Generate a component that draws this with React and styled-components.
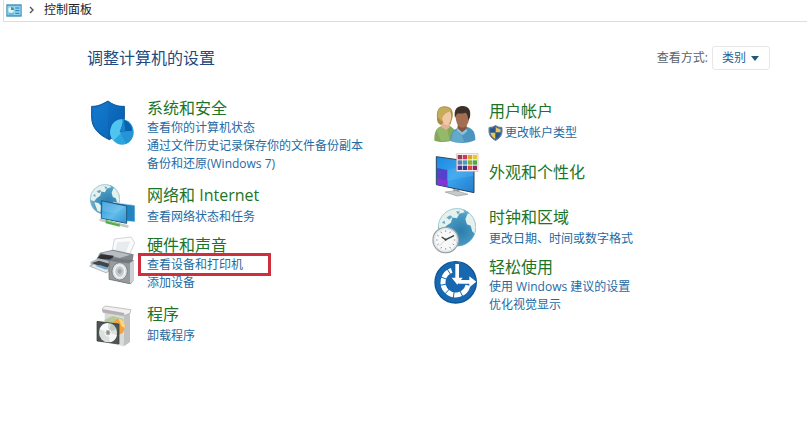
import React from "react";
import styled, { createGlobalStyle } from "styled-components";

const GlobalStyle = createGlobalStyle`
  * { box-sizing: border-box; }
  body {
    margin: 0;
    background: #fff;
    font-family: "Open Sans", "Noto Sans CJK SC", sans-serif;
    font-size: 12px;
    line-height: 18px;
    color: #222;
  }
`;

const AddressBar = styled.nav`
  display: flex;
  align-items: center;
  height: 22px;
  margin-left: 3px;
  padding: 0 2px 1px;
  border: solid #dcdfe0;
  border-width: 0 0 1px 1px;
`;
const Crumb = styled.a`
  color: #222;
  text-decoration: none;
`;
const CrumbChevron = styled.svg`
  width: 6px;
  height: 8px;
  margin: 0 9px 0 7px;
`;
const BarIcon = styled.svg`
  width: 16px;
  height: 13px;
`;

const Header = styled.header`
  display: flex;
  justify-content: space-between;
  align-items: center;
  padding: 24px 37px 0 87px;
`;
const Title = styled.h1`
  margin: 0;
  font-size: 16px;
  font-weight: 400;
  line-height: 24px;
  color: #234a80;
`;
const ViewBy = styled.div`
  display: flex;
  align-items: center;
  gap: 4px;
  color: #59636b;
`;
const SelectBox = styled.span`
  display: grid;
  align-items: center;
  & > * { grid-area: 1 / 1; }
`;
const Select = styled.select`
  appearance: none;
  width: 58px;
  height: 24px;
  padding: 0 0 0 9px;
  border: 1px solid #e4e8ea;
  border-radius: 3px;
  background: #fff;
  font: inherit;
  color: #1b66a0;
`;
const Arrow = styled.svg`
  width: 8px;
  height: 5px;
  justify-self: end;
  margin-right: 11px;
  pointer-events: none;
`;

const Columns = styled.main`
  display: grid;
  grid-template-columns: 1fr 1fr;
  padding: 28px 35px 24px 88px;
`;
const Column = styled.div`
  display: grid;
  align-content: start;
  grid-template-rows: ${(p) => p.$rows};
  padding-top: ${(p) => p.$top || 0}px;
`;
const Category = styled.section`
  display: flex;
  align-items: flex-start;
  gap: 11px;
`;
const Icon = styled.svg`
  flex: none;
  width: 48px;
  height: 48px;
  overflow: visible;
`;
const Details = styled.div`
  display: flex;
  flex-direction: column;
  align-items: flex-start;
  padding-top: ${(p) => (p.$centered ? 10 : 0)}px;
`;
const Name = styled.h2`
  margin: 0 0 ${(p) => (p.$spaced ? 3 : 1)}px;
  font-size: 16px;
  font-weight: 400;
  line-height: 20px;
  a { color: #1d7427; text-decoration: none; }
`;
const Task = styled.a`
  display: flex;
  align-items: center;
  gap: 2px;
  position: relative;
  color: #1e6aa3;
  text-decoration: none;
  white-space: nowrap;
`;
const MarkedTask = styled(Task)`
  &::after {
    content: "";
    position: absolute;
    inset: -3px -28px -2px -9px;
    border: 3px solid #cf2f3c;
  }
`;
const Shield = styled.svg`
  width: 15px;
  height: 16px;
  margin-left: -1px;
`;

const SecurityIcon = () => (
  <Icon viewBox="24 9 144 144" aria-hidden="true">
    <defs>
      <linearGradient id="sec" x1="0" y1="0" x2="1" y2="1">
        <stop offset="0" stopColor="#1378cd" /><stop offset="1" stopColor="#0759a8" />
      </linearGradient>
    </defs>
    <path d="M35 34C53 35 68 27 84 18C98 29 114 35 133 34V70C132 102 113 121 88 134C55 118 35 99 35 66Z" fill="url(#sec)" stroke="#075497" strokeWidth="3" />
    <path d="M40 39C57 39 70 32 84 23V129C53 113 40 95 40 66Z" fill="#1683d8" opacity=".25" />
    <ellipse cx="126" cy="111" rx="35" ry="38" fill="#2ba6df" />
    <path d="M126 73A35 38 0 0 0 100 137L126 112Z" fill="#50c3ee" />
    <path d="M119 111L132 74A35 38 0 0 1 157 108Z" fill="#0862ad" />
    <path d="M132 76L136 106L120 110Z" fill="#1c82cc" />
    <path d="M120 111L160 107A35 38 0 0 1 138 147Z" fill="#2494d4" />
  </Icon>
);

const Globe = ({ id, cx, cy, r }) => (
  <g>
    <defs>
      <radialGradient id={id} cx=".6" cy=".6" r=".65">
        <stop offset="0" stopColor="#2b7dac" /><stop offset=".65" stopColor="#4b9bc2" /><stop offset="1" stopColor="#8fbfd5" />
      </radialGradient>
      <clipPath id={id + "c"}><circle cx={cx} cy={cy} r={r} /></clipPath>
    </defs>
    <circle cx={cx} cy={cy} r={r} fill={`url(#${id})`} />
    <g clipPath={`url(#${id}c)`}>
      <g transform={`translate(${cx} ${cy}) scale(${r / 50})`} fill="#e5f1ed">
        <path d="M-40-32L-20-50L12-54L20-40L6-36L0-24L-12-26L-16-12L-28-4L-36 6L-48 2L-52-20Z" />
        <path d="M28-36L44-40L58-12L50 20L40 10L36-4L26-8L22-22Z" />
        <path d="M-36 10L-22 12L-10 24L-16 44L-26 36Z" />
        <path d="M-28-26l10-6 6 5-8 7zM-2-43l10 2-6 7zM-40-12l7-6 2 9z" fill="#67a9c7" />
      </g>
    </g>
    <circle cx={cx} cy={cy} r={r - 1} fill="none" stroke="#78aec7" strokeWidth="2" opacity=".7" />
  </g>
);

const NetworkIcon = () => (
  <Icon viewBox="24 30 144 144" aria-hidden="true">
    <defs>
      <linearGradient id="net" x1="0" y1="0" x2="1" y2="1">
        <stop offset="0" stopColor="#3194d4" /><stop offset=".55" stopColor="#62bcea" /><stop offset="1" stopColor="#2e93cf" />
      </linearGradient>
    </defs>
    <Globe id="ng" cx={75} cy={73} r={45} />
    <path d="M100 82L165 91V141L100 134Z" fill="#2284c0" stroke="#e3f2f8" strokeWidth="2" />
    <path d="M64 77L140 93V145L64 130Z" fill="url(#net)" stroke="#215b82" strokeWidth="3" />
    <path d="M68 80L136 95L108 115L68 108Z" fill="#8fd1ef" opacity=".3" />
    <path d="M62 135L142 154" stroke="#c5ccc8" strokeWidth="8" strokeLinecap="round" />
    <path d="M77 135L119 146V155L77 145Z" fill="#55ad4b" />
    <path d="M82 137L115 146" stroke="#a2da91" strokeWidth="3" />
  </Icon>
);

const HardwareIcon = () => (
  <Icon viewBox="24 15 144 144" aria-hidden="true">
    <path d="M103 27L154 21L164 39L146 78L95 72Z" fill="#fafbfb" stroke="#bec2c5" strokeWidth="2" />
    <path d="M112 37L150 34L138 68L105 64Z" fill="#e8ebee" />
    <path d="M60 68L99 59L161 73L158 92L121 106L45 96Z" fill="#83888d" />
    <path d="M63 69L98 62L151 74L119 84Z" fill="#b8bec3" />
    <path d="M62 73L101 77L95 89L51 86Z" fill="#2d3135" />
    <path d="M31 96L55 85L99 97L86 126L33 111Z" fill="#b6babd" />
    <path d="M35 99L57 92L91 102L80 116Z" fill="#3f464c" />
    <path d="M29 108L41 103L88 119L80 129Z" fill="#e4eaf0" stroke="#979ca0" strokeWidth="2" />
    <path d="M47 108L60 105L85 113L78 119Z" fill="#6fa8cd" />
    <path d="M87 91L96 84L162 91V150L152 162L87 148Z" fill="#74797d" />
    <path d="M87 91L149 99V161L87 148Z" fill="#969b9e" stroke="#686e72" strokeWidth="2" />
    <path d="M149 99L162 91V152L149 161Z" fill="#cdd1d3" />
    <ellipse cx="119" cy="124" rx="23" ry="26" fill="#dce0e2" stroke="#626a70" strokeWidth="2" />
    <ellipse cx="119" cy="124" rx="15" ry="18" fill="#c3c9cd" stroke="#f4f5f5" strokeWidth="4" />
    <ellipse cx="119" cy="124" rx="6" ry="7" fill="#9da5ab" />
  </Icon>
);

const ProgramsIcon = () => (
  <Icon viewBox="24 18 144 144" aria-hidden="true">
    <path d="M74 41L132 48V145L74 133Z" fill="#d9dadb" />
    <path d="M132 48L150 42V132L132 145Z" fill="#bec0c2" />
    <path d="M67 31L76 24L153 35L150 46L132 53L69 43Z" fill="#f0f0f0" stroke="#a7a7a8" strokeWidth="2" />
    <path d="M67 33L133 45L132 53L69 43Z" fill="#b6aeb2" />
    <path d="M73 66L97 54L130 62L128 105L100 110Z" fill="#b7c999" />
    <ellipse cx="116" cy="86" rx="18" ry="24" fill="#f4a33b" />
    <path d="M116 62L124 84L134 91A18 24 0 0 0 116 62" fill="#ffd580" />
    <path d="M51 70L117 78V138L51 129Z" fill="#4c5553" stroke="#2d3635" strokeWidth="2" />
    <ellipse cx="84" cy="104" rx="27" ry="29" fill="#dce1de" />
    <path d="M84 104L59 93A27 29 0 0 1 84 75Z" fill="#fafafa" />
    <path d="M84 104L111 111A27 29 0 0 1 90 133Z" fill="#f6f7f5" />
    <path d="M84 104L94 77A27 29 0 0 1 109 94Z" fill="#bec9c1" />
    <ellipse cx="84" cy="104" rx="9" ry="10" fill="#adb3b1" stroke="#fff" strokeWidth="3" />
    <ellipse cx="84" cy="104" rx="3" ry="4" fill="#7d8581" />
  </Icon>
);

const UsersIcon = () => (
  <Icon viewBox="15 18 144 144" aria-hidden="true">
    <path d="M28 137C27 112 34 99 48 94L73 91L90 105V133C72 143 45 143 28 137Z" fill="#83aa5a" />
    <path d="M34 104L48 95L66 99L74 135L48 139Z" fill="#9dbd71" opacity=".7" />
    <path d="M49 82H74V97L64 105L48 95Z" fill="#e3b293" />
    <path d="M36 69C34 44 43 34 58 34C76 34 86 44 83 66L76 89L61 77L48 90C38 86 36 79 36 69Z" fill="#a88e43" />
    <path d="M51 57C60 54 67 49 74 47C84 62 77 85 67 91C56 90 49 78 51 57Z" fill="#f0c8a8" />
    <path d="M38 66C37 42 46 36 61 37C70 38 77 43 79 49C64 51 53 59 49 79Z" fill="#c6ab58" />
    <path d="M76 138C76 118 82 106 98 99L127 96C144 102 151 111 151 135C130 147 96 146 76 138Z" fill="#4a94bd" />
    <path d="M82 118C85 109 95 104 104 103L118 142C99 143 84 140 78 137Z" fill="#70b4d3" opacity=".65" />
    <path d="M99 88H125V101L111 113L97 99Z" fill="#84553e" />
    <path d="M91 62C90 42 96 36 111 35C128 34 137 44 134 63C131 87 124 98 112 98C98 96 94 85 91 62Z" fill="#a36e51" />
    <path d="M90 68C86 45 95 34 111 33C129 32 139 44 135 66L130 76C128 62 127 54 120 53C108 58 99 53 95 58Z" fill="#3c3028" />
    <path d="M97 99L111 112L125 101L127 109L113 121L95 106Z" fill="#8fc0d8" />
  </Icon>
);

const swatches = ["#9b3752", "#c93964", "#d6a729", "#e5c82b", "#587eac", "#4b9cb8", "#8aaf2d", "#48a84a", "#4f2f94", "#303f89", "#e34343", "#922466"];

const AppearanceIcon = () => (
  <Icon viewBox="15 21 144 144" aria-hidden="true">
    <defs>
      <linearGradient id="scr" x1="0" y1="0" x2="1" y2="1">
        <stop offset="0" stopColor="#1a88e2" /><stop offset=".5" stopColor="#38a4ed" /><stop offset="1" stopColor="#237dcd" />
      </linearGradient>
    </defs>
    <path d="M85 132L103 136V145H85Z" fill="#8d9598" />
    <path d="M60 141L93 137L129 148L96 153Z" fill="#c6cacb" stroke="#989ea0" strokeWidth="2" />
    <path d="M34 35L147 51V143L34 119Z" fill="url(#scr)" stroke="#29455b" strokeWidth="3" />
    <path d="M36 69L67 75V125L36 118Z" fill="#5442cb" />
    <path d="M36 99L67 107V125L36 118Z" fill="#8435d6" />
    <path d="M67 75L145 57V92L67 107Z" fill="#72c0f2" opacity=".25" />
    <path d="M95 26H159V79H95Z" fill="#fff6f5" stroke="#d1aaa8" strokeWidth="2" />
    {swatches.map((color, i) => (
      <rect key={i} x={98 + (i % 4) * 15} y={30 + Math.floor(i / 4) * 16} width="13" height="13" fill={color} />
    ))}
  </Icon>
);

const ClockIcon = () => (
  <Icon viewBox="15 21 144 144" aria-hidden="true">
    <Globe id="cg" cx={96} cy={82} r={57} />
    <circle cx="62" cy="120" r="38" fill="#f7f8f8" stroke="#9ca4a9" strokeWidth="4" />
    <circle cx="62" cy="120" r="34" fill="none" stroke="#dee2e3" strokeWidth="3" />
    {Array.from({ length: 12 }, (_, i) => (
      <path key={i} d="M62 91V96" stroke="#68747d" strokeWidth="2" transform={`rotate(${i * 30} 62 120)`} />
    ))}
    <path d="M50 111L62 119L87 107" fill="none" stroke="#39424a" strokeWidth="4" />
    <path d="M62 119L43 138" stroke="#b2777a" strokeWidth="1" />
    <circle cx="62" cy="119" r="3" fill="#39424a" />
  </Icon>
);

const EaseIcon = () => (
  <Icon viewBox="15 6 144 144" aria-hidden="true">
    <circle cx="92" cy="82" r="62" fill="#1768b1" stroke="#0b5599" strokeWidth="4" />
    <path d="M80 46A38 38 0 1 0 129 91" fill="none" stroke="#fff" strokeWidth="15" />
    <path d="M92 82L62 35M92 82L39 63M92 82L35 93M92 82L52 125M92 82L83 140M92 82L118 134" stroke="#1768b1" strokeWidth="3" />
    <path d="M91 27H102V68H113L97 89L80 68H91Z" fill="#fff" />
    <path d="M101 75H133V64L154 80L133 97V86H101Z" fill="#fff" />
  </Icon>
);

const left = [
  { name: "系统和安全", icon: SecurityIcon, tasks: ["查看你的计算机状态", "通过文件历史记录保存你的文件备份副本", "备份和还原(Windows 7)"] },
  { name: "网络和 Internet", icon: NetworkIcon, tasks: ["查看网络状态和任务"] },
  { name: "硬件和声音", icon: HardwareIcon, tasks: ["查看设备和打印机", "添加设备"], marked: "查看设备和打印机" },
  { name: "程序", icon: ProgramsIcon, tasks: ["卸载程序"] },
];
const right = [
  { name: "用户帐户", icon: UsersIcon, tasks: ["更改帐户类型"], shield: true },
  { name: "外观和个性化", icon: AppearanceIcon, tasks: [] },
  { name: "时钟和区域", icon: ClockIcon, tasks: ["更改日期、时间或数字格式"] },
  { name: "轻松使用", icon: EaseIcon, tasks: ["使用 Windows 建议的设置", "优化视觉显示"] },
];

const AdminShield = () => (
  <Shield viewBox="0 0 30 32" aria-hidden="true">
    <path d="M2 5Q10 5 15 1Q20 5 28 5V14Q27 25 15 31Q3 25 2 14Z" fill="#34699f" />
    <path d="M15 4Q20 8 25 8V15H15ZM5 15H15V28Q6 23 5 15Z" fill="#f0c64f" />
    <path d="M5 8Q10 8 15 4V15H5ZM15 15H25Q24 23 15 28Z" fill="#2b5588" />
    <path d="M2 5Q10 5 15 1Q20 5 28 5V14Q27 25 15 31Q3 25 2 14Z" fill="none" stroke="#6d7f91" strokeWidth="2" />
  </Shield>
);

const CategoryItem = ({ item }) => {
  const Drawing = item.icon;
  return (
    <Category>
      <Drawing />
      <Details $centered={item.tasks.length === 0}>
        <Name $spaced={item.tasks.length === 1}><a href="#">{item.name}</a></Name>
        {item.tasks.map((task) => {
          const Link = task === item.marked ? MarkedTask : Task;
          return <Link key={task} href="#">{item.shield && <AdminShield />}{task}</Link>;
        })}
      </Details>
    </Category>
  );
};

export default function App() {
  return (
    <>
      <GlobalStyle />
      <AddressBar>
        <BarIcon viewBox="0 0 48 39" aria-hidden="true">
          <rect x="1" y="1" width="46" height="37" fill="#3789b5" />
          <rect x="4" y="5" width="40" height="29" fill="#8fd2ee" />
          <circle cx="15" cy="18" r="8" fill="#e6f5ed" />
          <path d="M15 18V9A9 9 0 0 1 24 18Z" fill="#3e9b67" />
          <path d="M28 12H40M28 20H40M28 28H40" stroke="#267caf" strokeWidth="3" />
          <path d="M8 30H23" stroke="#4a9fca" strokeWidth="3" />
        </BarIcon>
        <CrumbChevron viewBox="0 0 6 8" aria-hidden="true">
          <path d="M1 1L4 4L1 7" fill="none" stroke="#555" strokeWidth="1.4" />
        </CrumbChevron>
        <Crumb href="#">控制面板</Crumb>
      </AddressBar>
      <Header>
        <Title>调整计算机的设置</Title>
        <ViewBy>
          <label htmlFor="view">查看方式:</label>
          <SelectBox>
            <Select id="view"><option>类别</option></Select>
            <Arrow viewBox="0 0 8 5" aria-hidden="true"><path d="M0 0H8L4 5Z" fill="#1f5878" /></Arrow>
          </SelectBox>
        </ViewBy>
      </Header>
      <Columns>
        <Column $rows="87px 50px 69px 48px">
          {left.map((item) => <CategoryItem key={item.name} item={item} />)}
        </Column>
        <Column $rows="51px 55px 50px 50px" $top={3}>
          {right.map((item) => <CategoryItem key={item.name} item={item} />)}
        </Column>
      </Columns>
    </>
  );
}
